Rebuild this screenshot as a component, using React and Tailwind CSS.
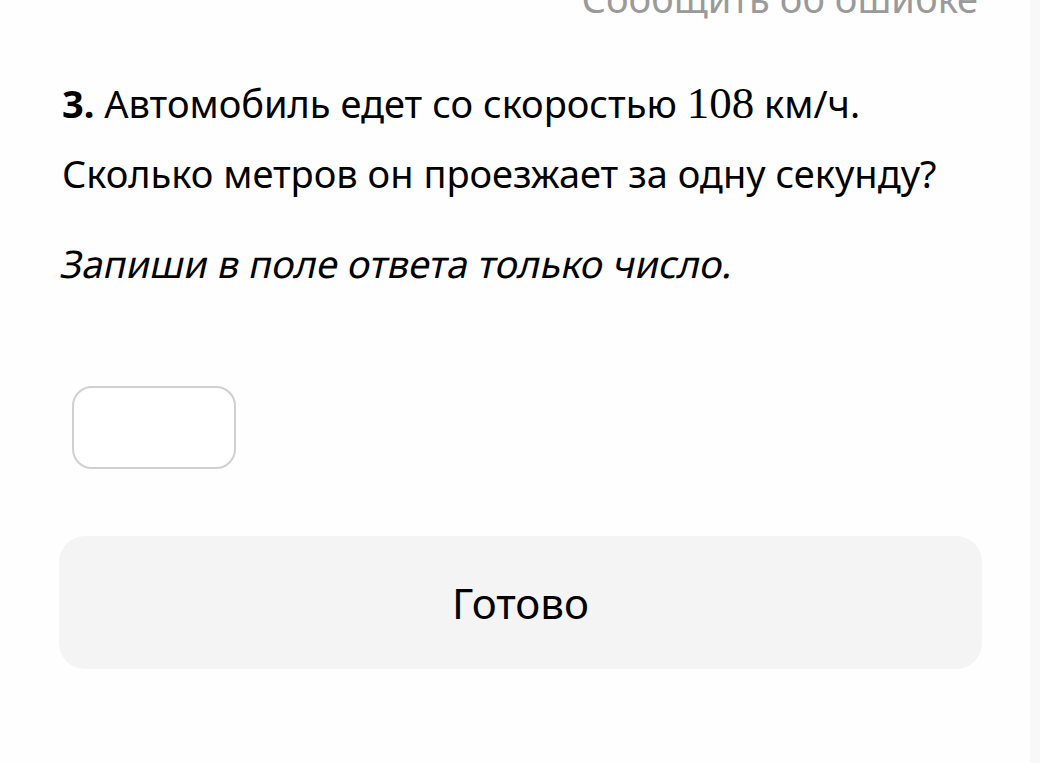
export default function App() {
  return (
    <div className="flex h-[763px] w-[1040px] overflow-hidden bg-[#fefefe] font-['Noto_Sans',sans-serif] text-black">
      <div className="flex-1 pl-[59px] pr-[48px]">
        <div className="-mt-[26px] flex justify-end pr-[4px]">
          <span className="text-[38px] leading-[48px] text-[#9a9a9a]">Сообщить об ошибке</span>
        </div>
        <div className="mt-[46px] pl-[3px] text-[38px] leading-[70px]">
          <p>
            <span className="font-bold">3.</span> Автомобиль едет со скоростью{" "}
            <span className="font-['Liberation_Serif',serif] text-[45px]">108</span> км/ч.
          </p>
          <p>Сколько метров он проезжает за одну секунду?</p>
          <p className="mt-[20px]">
            <span className="inline-block -skew-x-12">Запиши в поле ответа только число.</span>
          </p>
        </div>
        <div className="mt-[88px] pl-[13px]">
          <input className="h-[83px] w-[164px] rounded-[20px] border-2 border-[#d0d0d0] bg-white outline-none" />
        </div>
        <button className="mt-[67px] flex h-[133px] w-[923px] items-center justify-center rounded-[26px] bg-[#f4f4f4] text-[42px]">
          Готово
        </button>
      </div>
      <div className="w-[10px] bg-[#f8f8f8]" />
    </div>
  );
}
